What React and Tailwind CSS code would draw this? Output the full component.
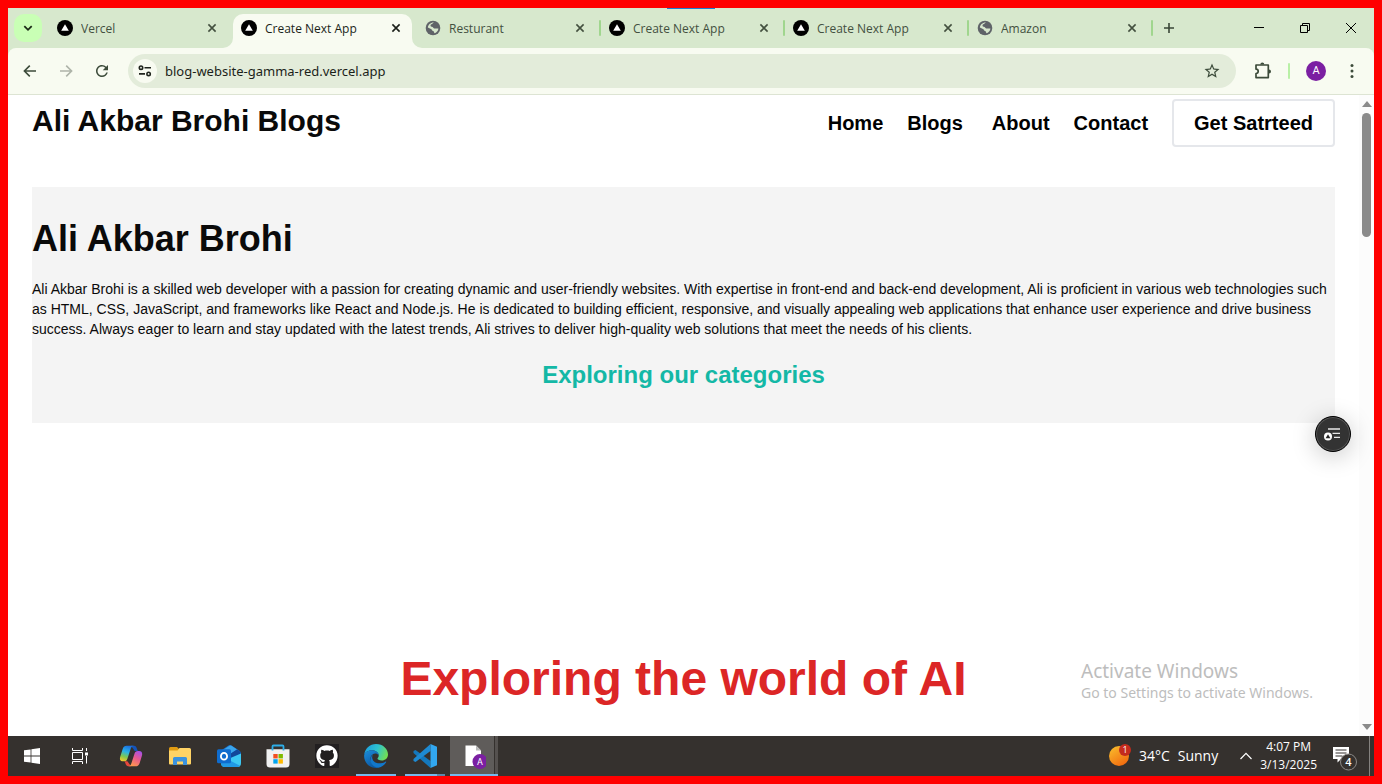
import React from "react";
import { MdStarOutline, MdRefresh } from "react-icons/md";
import { FaGithub } from "react-icons/fa";

const tabs = [
  { title: "Vercel", icon: "vercel" },
  { title: "Create Next App", icon: "vercel", active: true },
  { title: "Resturant", icon: "globe" },
  { title: "Create Next App", icon: "vercel", divider: true },
  { title: "Create Next App", icon: "vercel", divider: true },
  { title: "Amazon", icon: "globe", divider: true },
];

function VercelIcon() {
  return (
    <svg viewBox="0 0 16 16" className="size-4 shrink-0">
      <circle cx="8" cy="8" r="8" fill="#000" />
      <path d="M8 4.2 11.8 10.8H4.2z" fill="#fff" />
    </svg>
  );
}

function GlobeIcon() {
  return (
    <svg viewBox="0 0 16 16" className="size-4 shrink-0">
      <circle cx="8" cy="8" r="7.3" fill="#5f6368" />
      <path
        d="M9.200 2.600C8 3 7.800 3.700 6.400 4.200 5 4.700 5.300 6.600 6.800 6.800 8.200 7 8 8.300 9.200 8.400H13.400C13.300 10.700 11.500 12.800 9.200 13.200 9.400 12 8.900 11.400 7.900 11 6.600 10.500 7.300 9.300 6 8.900L2.900 7.600C3.100 5 5.600 2.300 9.200 2.600Z"
        fill="#d7e8cd"
      />
    </svg>
  );
}

function CloseIcon() {
  return (
    <svg viewBox="0 0 16 16" className="size-4" fill="none" stroke="currentColor" strokeWidth="1.6">
      <path d="M4.4 4.4 11.6 11.6M11.6 4.4 4.4 11.6" />
    </svg>
  );
}

function Flare({ side }) {
  const left = side === "left";
  return (
    <svg
      viewBox="0 0 10 10"
      className={left ? "absolute bottom-0 -left-2.5 size-2.5" : "absolute bottom-0 -right-2.5 size-2.5"}
      fill="#f8fbf1"
    >
      <path d={left ? "M10 0A10 10 0 0 1 0 10H10z" : "M0 0A10 10 0 0 0 10 10H0z"} />
    </svg>
  );
}

function Tab({ tab }) {
  return (
    <div className="relative flex min-w-0 max-w-[184px] flex-1">
      {tab.active && (
        <div className="absolute top-1.5 right-1 bottom-0 left-px rounded-t-[10px] bg-[#f8fbf1]">
          <Flare side="left" />
          <Flare side="right" />
        </div>
      )}
      {tab.divider && <span className="absolute top-3 left-[-1px] h-4 w-0.5 rounded-full bg-[#a0d68e]" />}
      <div
        className={
          tab.active
            ? "relative flex min-w-0 flex-1 items-center pr-3 pl-[9px] text-[#1b1f19]"
            : "relative flex min-w-0 flex-1 items-center pr-3 pl-[9px] text-[#43503f]"
        }
      >
        {tab.icon === "vercel" ? <VercelIcon /> : <GlobeIcon />}
        <span className="ml-2 flex-1 truncate pt-0.5 text-xs">{tab.title}</span>
        <button type="button" aria-label="Close tab" className="grid size-4 shrink-0 place-items-center">
          <CloseIcon />
        </button>
      </div>
    </div>
  );
}

function TabStrip() {
  return (
    <div className="relative flex h-10 shrink-0 bg-[#d7e8cd]">
      <span className="absolute top-0 left-[659px] h-px w-12 bg-[#1a7fd4]" />
      <div className="w-10 shrink-0 p-1.5">
        <button type="button" aria-label="Search tabs" className="grid size-7 place-items-center rounded-[10px] bg-[#c9ffb5] text-[#1b2a17]">
          <svg viewBox="0 0 12 12" className="size-3" fill="none" stroke="currentColor" strokeWidth="1.8">
            <path d="M2.3 4.2 6 7.8 9.7 4.2" />
          </svg>
        </button>
      </div>
      <div className="flex min-w-0 flex-1">
        {tabs.map((tab, i) => (
          <Tab key={i} tab={tab} />
        ))}
        <div className="relative flex items-center pl-[9px]">
          <span className="absolute top-3 left-[-1px] h-4 w-0.5 rounded-full bg-[#a0d68e]" />
          <button type="button" aria-label="New tab" className="grid size-4 place-items-center text-[#3a4637]">
            <svg viewBox="0 0 16 16" className="size-4" fill="none" stroke="currentColor" strokeWidth="1.6">
              <path d="M8 3v10M3 8h10" />
            </svg>
          </button>
        </div>
      </div>
      <div className="flex shrink-0 text-black">
        <button type="button" aria-label="Minimize" className="grid w-[46px] place-items-center">
          <svg viewBox="0 0 10 10" className="size-2.5" stroke="currentColor"><path d="M0 4.5h10" /></svg>
        </button>
        <button type="button" aria-label="Restore" className="grid w-[46px] place-items-center">
          <svg viewBox="0 0 10 10" className="size-2.5" fill="none" stroke="currentColor">
            <path d="M.5 2.5h7v7h-7zM2.5 2.5v-2h7v7h-2" />
          </svg>
        </button>
        <button type="button" aria-label="Close" className="grid w-[46px] place-items-center">
          <svg viewBox="0 0 10 10" className="size-2.5" fill="none" stroke="currentColor"><path d="M0 0 10 10M10 0 0 10" /></svg>
        </button>
      </div>
    </div>
  );
}

function Arrow({ flip }) {
  return (
    <svg viewBox="0 0 16 16" className="size-4" fill="none" stroke="currentColor" strokeWidth="1.6">
      <path d={flip ? "M2 8h11.5M8.2 2.6 13.6 8 8.2 13.4" : "M14 8H2.5M7.8 2.6 2.4 8l5.4 5.4"} />
    </svg>
  );
}

function Toolbar() {
  return (
    <div className="shrink-0 bg-[#d7e8cd]">
      <div className="flex h-[47px] items-center rounded-t-[8px] border-b border-[#dde4d3] bg-[#f8fbf1] pr-3.5 pl-3.5 text-[#3c4b3a]">
        <div className="flex items-center gap-5">
          <button type="button" aria-label="Back"><Arrow /></button>
          <button type="button" aria-label="Forward" className="text-[#aeb4a9]"><Arrow flip /></button>
          <button type="button" aria-label="Reload" className="-mx-px"><MdRefresh className="size-[18px]" /></button>
        </div>
        <div className="ml-[18px] flex h-[34px] min-w-0 flex-1 items-center rounded-full bg-[#e3ecda] pr-[15px] pl-[5px]">
          <button type="button" aria-label="Site information" className="grid size-6 shrink-0 place-items-center rounded-full bg-[#f8fbf1] text-[#20251e]">
            <svg viewBox="0 0 16 16" className="size-4" fill="none" stroke="currentColor" strokeWidth="1.6">
              <circle cx="4" cy="4.7" r="1.7" />
              <path d="M7.5 4.7H14M2 10.9h6" />
              <circle cx="11.6" cy="10.9" r="1.7" />
            </svg>
          </button>
          <input
            aria-label="Address"
            defaultValue="blog-website-gamma-red.vercel.app"
            className="ml-2 min-w-0 flex-1 bg-transparent pt-px font-['Noto_Sans','Segoe_UI',sans-serif] text-[13px] text-[#1b1f19] outline-none"
          />
          <button type="button" aria-label="Bookmark"><MdStarOutline className="size-[18px]" /></button>
        </div>
        <div className="ml-[18px] flex shrink-0 items-center">
          <button type="button" aria-label="Extensions">
            <svg viewBox="0 0 18 18" className="size-[18px]" fill="none" stroke="currentColor" strokeWidth="1.7" strokeLinejoin="round">
              <path d="M2 3h12.3v12.6H2v-4.1a2.2 2.2 0 0 0 0-4.4z" />
              <path d="M6.3 2.4a2 2 0 0 1 4 0zM15 7.4a2 2 0 0 1 0 4z" fill="currentColor" stroke="none" />
            </svg>
          </button>
          <span className="ml-4 h-4 w-0.5 rounded-full bg-[#b9f0a6]" />
          <button type="button" aria-label="Profile" className="ml-4 grid size-5 place-items-center rounded-full bg-[#7b1fa2] font-[Roboto,sans-serif] text-[11px] text-white">A</button>
          <button type="button" aria-label="Menu" className="ml-[18px]">
            <svg viewBox="0 0 16 16" className="size-4" fill="currentColor">
              <circle cx="8" cy="2.6" r="1.5" /><circle cx="8" cy="8" r="1.5" /><circle cx="8" cy="13.4" r="1.5" />
            </svg>
          </button>
        </div>
      </div>
    </div>
  );
}

function Page() {
  return (
    <div className="relative flex min-h-0 flex-1 bg-white font-['Liberation_Sans',Arial,sans-serif] text-[#0a0a0a]">
      <main className="min-w-0 flex-1 overflow-hidden px-6">
        <header className="flex items-start justify-between pt-1 pb-10">
          <h1 className="pt-1 text-3xl font-bold">Ali Akbar Brohi Blogs</h1>
          <nav className="flex items-center gap-6 text-xl font-bold text-black">
            <a href="#home">Home</a>
            <a href="#blogs" className="pr-[5px]">Blogs</a>
            <a href="#about">About</a>
            <a href="#contact">Contact</a>
            <button type="button" className="h-12 rounded border-2 border-gray-200 px-5">Get Satrteed</button>
          </nav>
        </header>
        <section className="flex flex-col gap-5 bg-[#f4f4f4] py-8">
          <h2 className="text-4xl font-bold">Ali Akbar Brohi</h2>
          <p className="text-sm">
            Ali Akbar Brohi is a skilled web developer with a passion for creating dynamic and user-friendly websites. With
            expertise in front-end and back-end development, Ali is proficient in various web technologies such as HTML, CSS,
            JavaScript, and frameworks like React and Node.js. He is dedicated to building efficient, responsive, and visually
            appealing web applications that enhance user experience and drive business success. Always eager to learn and stay
            updated with the latest trends, Ali strives to deliver high-quality web solutions that meet the needs of his clients.
          </p>
          <h3 className="text-center text-2xl font-bold text-[#14b8a6]">Exploring our categories</h3>
        </section>
        <h2 className="mt-[232px] text-center text-5xl font-bold text-[#dc2626]">Exploring the world of AI</h2>
      </main>
      <div className="flex w-[15px] shrink-0 flex-col items-center bg-[#fcfcfc] py-1.5 text-[#8b8b8b]">
        <svg viewBox="0 0 10 6" className="h-1.5 w-2.5" fill="currentColor"><path d="M5 0 10 6H0z" /></svg>
        <div className="mt-1.5 h-[124px] w-[9px] rounded-full bg-[#8b8b8b]" />
        <svg viewBox="0 0 10 6" className="mt-auto h-1.5 w-2.5" fill="currentColor"><path d="M5 6 10 0H0z" /></svg>
      </div>
      <button
        type="button"
        aria-label="Vercel toolbar"
        className="absolute top-[321px] right-[23px] grid size-9 place-items-center rounded-full border border-black bg-[#333] shadow-[0_4px_24px_rgba(0,0,0,0.22)] ring-1 ring-[#555] ring-inset"
      >
        <svg viewBox="0 0 18 14" className="h-3.5 w-[18px]" fill="none" stroke="#e8e8e8" strokeWidth="1.3">
          <path d="M4 2h12M8.500 6.300h7.500M10 10.400h6" />
          <circle cx="4" cy="9.600" r="4" fill="#fff" stroke="none" />
          <path d="M4 7.300 6.400 11.300H1.600z" fill="#222" stroke="none" />
        </svg>
      </button>
      <div className="pointer-events-none absolute right-[57px] bottom-[33px] w-[236px] font-['Noto_Sans','Segoe_UI',sans-serif] whitespace-nowrap text-[#bdbdbd]">
        <p className="text-[19px] leading-6">Activate Windows</p>
        <p className="text-sm leading-5">Go to Settings to activate Windows.</p>
      </div>
    </div>
  );
}

function TaskButton({ label, children, state }) {
  return (
    <button
      type="button"
      aria-label={label}
      className={state === "active" ? "relative grid w-12 place-items-center bg-[#5f5c5a]" : "relative grid w-12 place-items-center"}
    >
      {children}
      {state === "open" && <span className="absolute bottom-0 left-1 h-0.5 w-10 bg-[#76b9ed]" />}
      {state === "stacked" && (
        <span className="absolute bottom-0 left-1 flex h-0.5 w-10">
          <span className="flex-1 bg-[#76b9ed]" />
          <span className="w-2 bg-[#5b87ab]" />
        </span>
      )}
      {state === "active" && (
        <>
          <span className="absolute inset-y-0 right-0 w-1 border-l border-[#35312e] bg-[#55514f]" />
          <span className="absolute inset-x-0 bottom-0 h-0.5 bg-[#76b9ed]" />
        </>
      )}
    </button>
  );
}

function Taskbar() {
  return (
    <footer className="flex h-10 shrink-0 justify-between bg-[#35312e] text-white">
      <div className="flex">
        <TaskButton label="Start">
          <svg viewBox="0 0 16 16" className="size-4" fill="#fff">
            <path d="M0 2.300 6.600 1.400v6.200H0zM7.400 1.300 16 0v7.600H7.400zM0 8.400h6.600v6.200L0 13.700zM7.400 8.400H16V16l-8.600-1.300z" />
          </svg>
        </TaskButton>
        <TaskButton label="Task view">
          <svg viewBox="0 0 18 16" className="h-4 w-[18px]" fill="none" stroke="#fff">
            <path d="M1.500 0v2.500h10V0M1.500 4.500h10v7h-10zM1.500 16v-2.500h10V16M15.500 0v3M15.500 8v7.500" />
            <path d="M14 4.500h3v3h-3z" fill="#fff" stroke="none" />
          </svg>
        </TaskButton>
        <div className="ml-[3px] flex gap-px">
          <TaskButton label="Copilot">
            <svg viewBox="0 0 24 22" className="h-[22px] w-6">
              <defs>
                <linearGradient id="cpA" x1="0.600" y1="0" x2="0.300" y2="1">
                  <stop offset="0" stopColor="#1b6fe0" /><stop offset=".4" stopColor="#29b3e8" /><stop offset=".72" stopColor="#7fc850" /><stop offset="1" stopColor="#f0c92e" />
                </linearGradient>
                <linearGradient id="cpB" x1="0.800" y1="0" x2="0.300" y2="1">
                  <stop offset="0" stopColor="#a550e8" /><stop offset=".45" stopColor="#e8598f" /><stop offset="1" stopColor="#ff9a4a" />
                </linearGradient>
              </defs>
              <path d="M12 .8h3c2 0 2.500 1.400 3 3.200.4 1.400.9 2 1.800 2h-4z" fill="#1453b8" />
              <path d="M15 1C13 1 12.200 2 11.600 4L8.500 13.500C7.800 15.600 7 16.300 5 16.300H4C1.200 16.300.4 14.300 1.300 11.500L3.600 4.200C4.400 1.800 5.600.8 7.700.8H14z" fill="url(#cpA)" />
              <path d="M12 21.300H9.500c-2 0-2.700-1.400-3.200-3.200-.3-1.200-.8-1.800-1.700-1.800h3.800z" fill="#e5483c" />
              <path d="M9 21.200c2 0 2.800-1 3.400-3L15.400 9C16.100 6.800 17 6 19 6h1c2.800 0 3.700 2 2.900 4.700l-2.200 7.200c-.8 2.400-2 3.400-4.200 3.400H10z" fill="url(#cpB)" />
            </svg>
          </TaskButton>
          <TaskButton label="File Explorer">
            <svg viewBox="0 0 22 20" className="h-5 w-[22px]">
              <path d="M0 2.500Q0 1 1.500 1H8l2 2H20.500Q22 3 22 4.500V8H0z" fill="#e09b12" />
              <path d="M0 4.500h8.500L10.500 2H20.500Q22 2 22 3.500V17.500Q22 18.500 21 18.500H1Q0 18.500 0 17.500z" fill="#ffd365" />
              <path d="M4 19v-6.500Q4 11 5.500 11h11Q18 11 18 12.500V19h-4v-3.500h-6V19z" fill="#3c92dd" />
            </svg>
          </TaskButton>
          <TaskButton label="Outlook">
            <svg viewBox="0 0 24 24" className="size-6">
              <path d="M2.500 9Q2.500 7.500 4 6.500L11.500 1.600q1.500-1 3 0L22.500 6.800Q24 7.800 24 9.500V15H2.500z" fill="#1a6fc9" />
              <path d="M6 6 12.500 1.800Q13.500 1.300 14.500 1.800L20 5.500 10 12z" fill="#3aa5ec" />
              <path d="M10 12 20 5.500 22.500 7Q24 8 24 9.500L13 16z" fill="#12479a" />
              <path d="M24 9.500V19Q24 23 20.500 23H8Q4 23 4 19V18z" fill="#3cc8f4" />
              <path d="M12 16 23 21.800Q22 23 20.500 23H8Q4 23 4 19V18z" fill="#2199e6" />
              <rect y="5.300" width="14" height="14" rx="1.500" fill="#0f6cce" />
              <ellipse cx="7" cy="12.300" rx="3.100" ry="3.400" fill="none" stroke="#fff" strokeWidth="1.800" />
            </svg>
          </TaskButton>
          <TaskButton label="Microsoft Store">
            <svg viewBox="0 0 24 24" className="size-6">
              <path d="M.5 5.300h23V20Q23.500 23.500 20 23.500H4Q.5 23.500.5 20z" fill="#f1f1f1" />
              <path d="M6.500 6.500V2.500Q6.500 1.500 7.500 1.500h9q1 0 1 1V6.500" fill="none" stroke="#2eaee8" strokeWidth="1.800" />
              <path d="M7.300 10h4.400v4.400H7.300z" fill="#f25022" /><path d="M12.500 10h4.400v4.400h-4.400z" fill="#7fba00" />
              <path d="M7.300 15.200h4.400v4.400H7.300z" fill="#00a4ef" /><path d="M12.500 15.200h4.400v4.400h-4.400z" fill="#ffb900" />
            </svg>
          </TaskButton>
          <TaskButton label="GitHub">
            <span className="grid size-6 place-items-center bg-[#221f20]"><FaGithub className="size-[22px] text-white" /></span>
          </TaskButton>
          <TaskButton label="Edge" state="open">
            <svg viewBox="0 0 24 24" className="size-6">
              <defs>
                <linearGradient id="edA" x1="0" y1="0.300" x2="1" y2="0.600">
                  <stop offset="0" stopColor="#1c9fe0" /><stop offset=".5" stopColor="#2ec3d0" /><stop offset="1" stopColor="#74e04f" />
                </linearGradient>
                <linearGradient id="edB" x1="0" y1="0" x2="0.500" y2="1">
                  <stop offset="0" stopColor="#1b8edb" /><stop offset="1" stopColor="#0c59a4" />
                </linearGradient>
              </defs>
              <path d="M.2 10.800C1 4.500 5.800 0 12 0c7 0 12 5 12 10.500 0 3.700-2.900 6-6.200 6-2.800 0-4.300-.9-4.300-1.900 0-.8 1.200-1.200 1.200-3.100 0-2.600-2.700-5.200-6.700-5.200-4.400 0-7.200 2.600-7.800 4.500z" fill="url(#edA)" />
              <path d="M.1 12C0 8.500 3.600 6.200 8 6.200c3.800 0 6.700 2.300 6.700 5.100-1-1.400-2.300-1.900-3.500-1.800-3.300.3-5 3-4.600 6.200C7.100 20 10.600 23.200 14.500 23.700 6.800 25.300.2 19.500.1 12z" fill="url(#edB)" />
              <path d="M9.300 10.300c-2.500 2.300-1 9 6.100 9 2.300 0 4.500-.7 6-1.600.6-.3 1 .1.700.6-1.600 2.700-4.300 4.700-7.600 5.400C9 23.400 6.200 19 6.600 15.500c.2-2.400 1.200-4.200 2.700-5.200z" fill="#1278cc" />
            </svg>
          </TaskButton>
          <TaskButton label="Visual Studio Code" state="stacked">
            <svg viewBox="0 0 24 24" className="size-6">
              <path d="M2.500 6 .5 7v2L17.500 24V17z" fill="#1478bd" />
              <path d="M2.500 18 .5 17v-2L17.500 0V7z" fill="#1e8ad2" />
              <path d="M17.500 0 24 2.800v18.400L17.500 24z" fill="#32a7f0" />
            </svg>
          </TaskButton>
          <TaskButton label="Document" state="active">
            <svg viewBox="0 0 24 26" className="h-[26px] w-6">
              <path d="M3.500 2.500h10.500l5 5V23h-15.500z" fill="#fff" />
              <path d="M14 2.500v5h5z" fill="#b9b9b9" />
              <circle cx="18" cy="18.500" r="7.500" fill="#7b1fa2" />
              <text x="18" y="22" textAnchor="middle" fontSize="9" fontFamily="Roboto, sans-serif" fill="#fff">A</text>
            </svg>
          </TaskButton>
        </div>
      </div>
      <div className="flex items-center">
        <button type="button" className="flex items-center text-sm">
          <svg viewBox="0 0 24 24" className="size-6">
            <defs>
              <linearGradient id="sun" x1="0" y1="0" x2="0.700" y2="1">
                <stop offset="0" stopColor="#f9c22e" /><stop offset="1" stopColor="#f26a0f" />
              </linearGradient>
            </defs>
            <circle cx="12" cy="12" r="10" fill="url(#sun)" />
            <circle cx="18" cy="6" r="6" fill="#c42b1c" />
            <text x="18" y="9.200" textAnchor="middle" fontSize="9" fontFamily="Open Sans, sans-serif" fill="#fff">1</text>
          </svg>
          <span className="ml-2">34°C</span>
          <span className="ml-2">Sunny</span>
        </button>
        <button type="button" aria-label="Show hidden icons" className="ml-[22px]">
          <svg viewBox="0 0 12 8" className="h-2 w-3" fill="none" stroke="#fff" strokeWidth="1.200"><path d="M.5 7 6 1.300 11.500 7" /></svg>
        </button>
        <div className="ml-2 text-center text-xs leading-[18px]">
          <div>4:07 PM</div>
          <div>3/13/2025</div>
        </div>
        <button type="button" aria-label="Notifications" className="ml-3.5 pt-1">
          <svg viewBox="0 0 26 26" className="size-[26px]">
            <path d="M2 2h16v12H10l-3.500 3.500V14H2z" fill="#fff" />
            <path d="M4.500 5h11M4.500 8h11M4.500 11h7" stroke="#35312e" />
            <circle cx="17.500" cy="17" r="8" fill="#35312e" stroke="#8c8987" />
            <text x="17.500" y="21" textAnchor="middle" fontSize="11" fontWeight="600" fontFamily="Open Sans, sans-serif" fill="#fff">4</text>
          </svg>
        </button>
        <span className="mr-1 ml-3 h-full w-px bg-[#85827f]" />
      </div>
    </footer>
  );
}

export default function App() {
  return (
    <div className="flex h-screen flex-col overflow-hidden border-8 border-[#ff0000] font-['Open_Sans','Segoe_UI',sans-serif]">
      <TabStrip />
      <Toolbar />
      <Page />
      <Taskbar />
    </div>
  );
}
